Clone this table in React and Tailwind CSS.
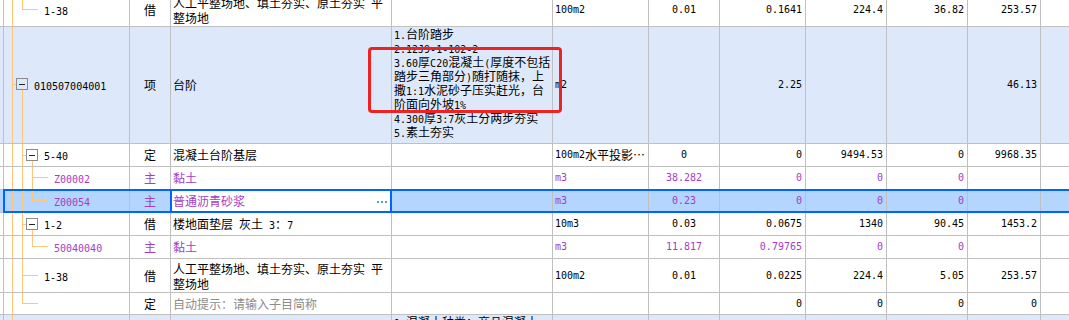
import React from "react";

const OR = "#ffc676";

function T({ s }) {
  if (!s) return null;
  const parts = s.split(/([\x20-\x7e]+)/);
  return parts.map((p, i) =>
    /^[\x20-\x7e]+$/.test(p) ? (
      <span key={i} className="font-['DejaVu_Sans_Mono',monospace] text-[10px] leading-none whitespace-pre">
        {p}
      </span>
    ) : (
      <React.Fragment key={i}>{p}</React.Fragment>
    )
  );
}

function Tree({ w, h, children }) {
  return (
    <svg
      width={w}
      height={h}
      viewBox={`4 0 ${w} ${h}`}
      className="block shrink-0"
      shapeRendering="crispEdges"
    >
      {children}
    </svg>
  );
}

const V = (x, y1, y2) => <line x1={x + 0.5} x2={x + 0.5} y1={y1} y2={y2} stroke={OR} />;
const H = (y, x1, x2) => <line x1={x1} x2={x2} y1={y + 0.5} y2={y + 0.5} stroke={OR} />;
const Box = (x, y) => (
  <g>
    <rect x={x + 0.5} y={y + 0.5} width={11} height={11} fill="none" stroke="#8a8a8a" />
    <line x1={x + 3} x2={x + 9} y1={y + 6.5} y2={y + 6.5} stroke="#222" />
  </g>
);

function Row({ h, bg, tree, code, type, name, unit, q, c6, c7, c8, c9, purple, gray, sel, nameLines, descNode }) {
  const tc = purple ? "text-[#a33dc4]" : "text-black";
  return (
    <div className={`relative grid grid-cols-[4px_126px_41px_221px_161px_96px_71px_86px_81px_81px_73px_1fr] border-b border-[#c0c0c0] ${h} ${bg}`}>
      <div className="border-r border-[#c0c0c0]" />
      <div className={`flex items-center border-r border-[#c0c0c0] overflow-hidden ${tc}`}>
        {tree}
        <span className="leading-[14px] whitespace-nowrap"><T s={code} /></span>
      </div>
      <div className={`flex items-center justify-center border-r border-[#c0c0c0] ${tc}`}>{type}</div>
      <div className={`relative flex items-center border-r border-[#c0c0c0] pl-[2px] ${gray ? "text-[#8c8c8c]" : tc}`}>
        {sel ? (
          <div className="absolute -left-px -right-px -top-px -bottom-px z-20 flex items-center justify-between border-2 border-[#0064ff] bg-white pl-px pr-[3px]">
            <span className="leading-[14px]"><T s={name} /></span>
            <span className="flex gap-[2px] pt-px">
              <span className="h-[2px] w-[2px] bg-[#5a9bd8]" />
              <span className="h-[2px] w-[2px] bg-[#5a9bd8]" />
              <span className="h-[2px] w-[2px] bg-[#5a9bd8]" />
            </span>
          </div>
        ) : nameLines ? (
          <div className="whitespace-nowrap">
            {nameLines.map((l, i) => (
              <div key={i} className="h-[15px] leading-[15px]"><T s={l} /></div>
            ))}
          </div>
        ) : (
          <span className="leading-[14px] whitespace-nowrap"><T s={name} /></span>
        )}
      </div>
      <div className="border-r border-[#c0c0c0] pl-[2px] overflow-hidden">{descNode}</div>
      <div className={`flex items-center border-r border-[#c0c0c0] pl-[2px] whitespace-nowrap overflow-hidden leading-[14px] ${tc}`}>
        <T s={unit} />
      </div>
      <div className={`flex items-center justify-center border-r border-[#c0c0c0] leading-[14px] ${tc}`}><T s={q} /></div>
      <div className={`flex items-center justify-end border-r border-[#c0c0c0] pr-[3px] leading-[14px] ${tc}`}><T s={c6} /></div>
      <div className={`flex items-center justify-end border-r border-[#c0c0c0] pr-[3px] leading-[14px] ${tc}`}><T s={c7} /></div>
      <div className={`flex items-center justify-end border-r border-[#c0c0c0] pr-[3px] leading-[14px] ${tc}`}><T s={c8} /></div>
      <div className={`flex items-center justify-end border-r border-[#c0c0c0] pr-[3px] leading-[14px] ${tc}`}><T s={c9} /></div>
      <div />
      {sel && (
        <div className="pointer-events-none absolute left-[3px] -right-[4px] -top-px -bottom-px z-10 border-2 border-[#0064ff]" />
      )}
    </div>
  );
}

const descLines = [
  "1.台阶踏步",
  "2.12J9-1-102-2",
  "3.60厚C20混凝土(厚度不包括",
  "踏步三角部分)随打随抹，上",
  "撒1:1水泥砂子压实赶光，台",
  "阶面向外坡1%",
  "4.300厚3:7灰土分两步夯实",
  "5.素土夯实",
];

export default function App() {
  return (
    <div className="relative h-[320px] w-[1069px] overflow-hidden bg-white font-['Noto_Sans_CJK_SC',sans-serif] text-[12px] text-black">
      <div className="-mt-[7px]">
        <Row
          h="h-[34px]"
          bg="bg-white"
          tree={
            <Tree w={40} h={33}>
              {V(12, 0, 33)}
              {V(22, 0, 17)}
              {H(16, 22, 38)}
            </Tree>
          }
          code="1-38"
          type="借"
          nameLines={["人工平整场地、填土夯实、原土夯实 平", "整场地"]}
          unit="100m2"
          q="0.01"
          c6="0.1641"
          c7="224.4"
          c8="36.82"
          c9="253.57"
        />
        <Row
          h="h-[117px]"
          bg="bg-[#dde9fb]"
          tree={
            <Tree w={30} h={116}>
              {V(12, 0, 116)}
              {H(57, 12, 16)}
              {Box(16, 51)}
              {V(22, 63, 116)}
            </Tree>
          }
          code="010507004001"
          type="项"
          name="台阶"
          descNode={
            <div className="whitespace-nowrap">
              {descLines.map((l, i) => (
                <div key={i} className="h-[14px] leading-[14px]"><T s={l} /></div>
              ))}
            </div>
          }
          unit="m2"
          q=""
          c6="2.25"
          c9="46.13"
        />
        <Row
          h="h-[23px]"
          bg="bg-white"
          tree={
            <Tree w={40} h={22}>
              {V(12, 0, 22)}
              {V(22, 0, 22)}
              {H(11, 22, 26)}
              {Box(26, 5)}
              {V(32, 17, 22)}
            </Tree>
          }
          code="5-40"
          type="定"
          name="混凝土台阶基层"
          unit="100m2水平投影…"
          q="0"
          c6="0"
          c7="9494.53"
          c8="0"
          c9="9968.35"
        />
        <Row
          h="h-[23px]"
          bg="bg-white"
          purple
          tree={
            <Tree w={50} h={22}>
              {V(12, 0, 22)}
              {V(22, 0, 22)}
              {V(32, 0, 22)}
              {H(10, 32, 48)}
            </Tree>
          }
          code="Z00002"
          type="主"
          name="黏土"
          unit="m3"
          q="38.282"
          c6="0"
          c7="0"
          c8="0"
        />
        <Row
          h="h-[23px]"
          bg="bg-[#b4d5fd]"
          purple
          sel
          tree={
            <Tree w={50} h={22}>
              {V(12, 0, 22)}
              {V(22, 0, 22)}
              {V(32, 0, 11)}
              {H(10, 32, 48)}
            </Tree>
          }
          code="Z00054"
          type="主"
          name="普通沥青砂浆"
          unit="m3"
          q="0.23"
          c6="0"
          c7="0"
          c8="0"
        />
        <Row
          h="h-[23px]"
          bg="bg-white"
          tree={
            <Tree w={40} h={22}>
              {V(12, 0, 22)}
              {V(22, 0, 22)}
              {H(11, 22, 26)}
              {Box(26, 5)}
              {V(32, 17, 22)}
            </Tree>
          }
          code="1-2"
          type="借"
          name="楼地面垫层 灰土 3：7"
          unit="10m3"
          q="0.03"
          c6="0.0675"
          c7="1340"
          c8="90.45"
          c9="1453.2"
        />
        <Row
          h="h-[23px]"
          bg="bg-white"
          purple
          tree={
            <Tree w={50} h={22}>
              {V(12, 0, 22)}
              {V(22, 0, 22)}
              {V(32, 0, 11)}
              {H(10, 32, 48)}
            </Tree>
          }
          code="50040040"
          type="主"
          name="黏土"
          unit="m3"
          q="11.817"
          c6="0.79765"
          c7="0"
          c8="0"
        />
        <Row
          h="h-[34px]"
          bg="bg-white"
          tree={
            <Tree w={40} h={33}>
              {V(12, 0, 33)}
              {V(22, 0, 33)}
              {H(16, 22, 38)}
            </Tree>
          }
          code="1-38"
          type="借"
          nameLines={["人工平整场地、填土夯实、原土夯实 平", "整场地"]}
          unit="100m2"
          q="0.01"
          c6="0.0225"
          c7="224.4"
          c8="5.05"
          c9="253.57"
        />
        <Row
          h="h-[22px]"
          bg="bg-white"
          gray
          tree={
            <Tree w={40} h={21}>
              {V(12, 0, 21)}
              {V(22, 0, 11)}
              {H(10, 22, 38)}
            </Tree>
          }
          code=""
          type="定"
          name="自动提示：请输入子目简称"
          c6="0"
          c7="0"
          c8="0"
          c9="0"
        />
        <Row
          h="h-[23px]"
          bg="bg-[#dde9fb]"
          tree={
            <Tree w={30} h={22}>
              {V(12, 0, 22)}
            </Tree>
          }
          code=""
          type=""
          name=""
          descNode={
            <div className="whitespace-nowrap">
              <div className="h-[14px] leading-[14px]"><T s="1.混凝土种类：商品混凝土" /></div>
            </div>
          }
        />
      </div>
      <div className="pointer-events-none absolute left-[368px] top-[47px] h-[66px] w-[194px] rounded-[4px] border-[3px] border-[#ee2222]" />
    </div>
  );
}
